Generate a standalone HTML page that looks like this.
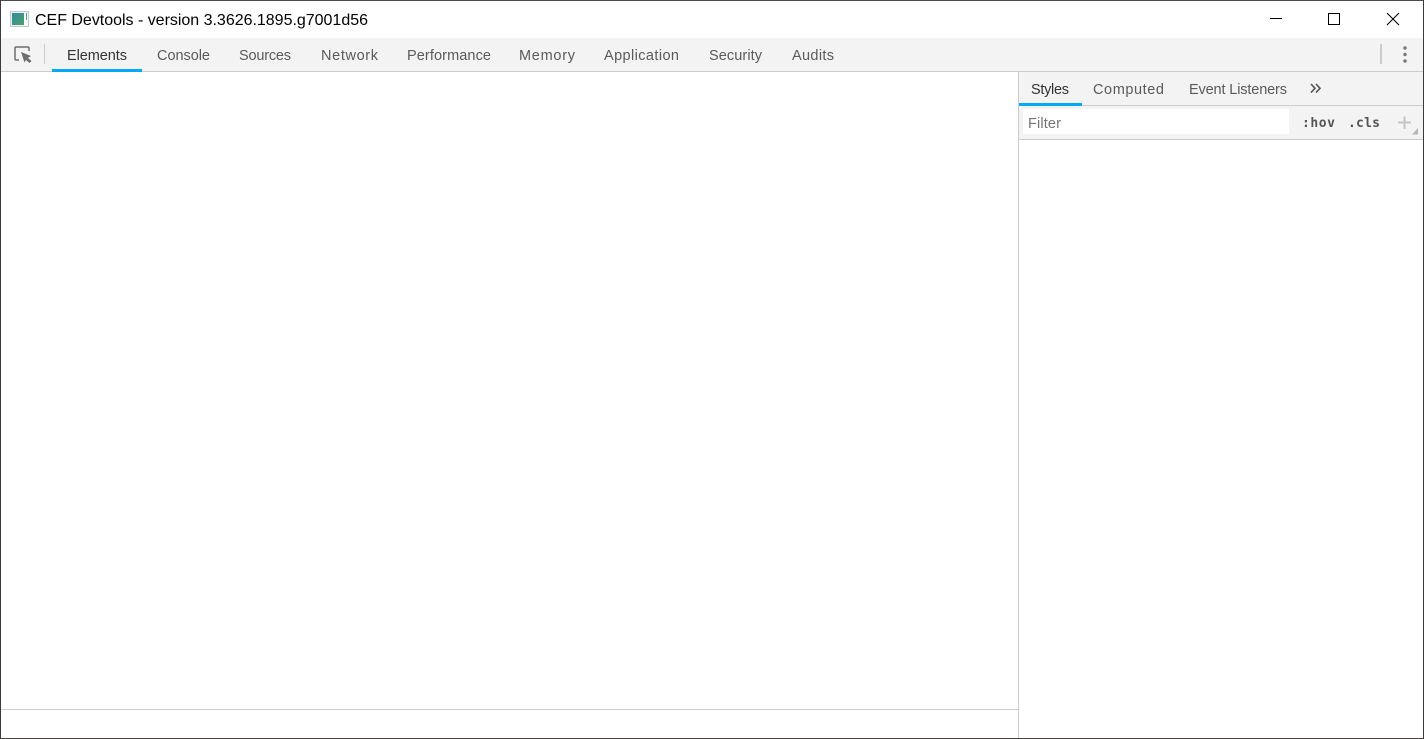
<!DOCTYPE html>
<html lang="en"><head><meta charset="utf-8"><title>CEF Devtools</title>
<style>
html,body{margin:0;padding:0;width:1424px;height:739px;overflow:hidden;background:#fff}
svg{display:block;position:absolute;left:0;top:0}
text{font-family:"Liberation Sans",sans-serif;font-size:14.5px;fill:#5a5a5a}
.m{font-family:"DejaVu Sans Mono",monospace;font-size:13px;font-weight:bold;fill:#555}
</style></head><body>
<svg width="1424" height="739" viewBox="0 0 1424 739" xmlns="http://www.w3.org/2000/svg">
<defs><linearGradient id="g" x1="0" y1="0" x2="1" y2="1"><stop offset="0" stop-color="#2f8f9f"/><stop offset="1" stop-color="#4f9f6a"/></linearGradient></defs>
<rect width="1424" height="739" fill="#fff"/>
<!-- window frame -->
<rect x="0" y="0" width="1424" height="1" fill="#4a4a4a"/>
<rect x="0" y="0" width="1" height="739" fill="#3a3a3a"/>
<rect x="1423" y="0" width="1" height="739" fill="#3a3a3a"/>
<rect x="0" y="738" width="1424" height="1" fill="#4a4442"/>
<!-- title bar -->
<rect x="10.500" y="11.500" width="18" height="15" fill="#eef0f1" stroke="#c4c9cc"/>
<rect x="12" y="13" width="12" height="12" fill="url(#g)"/>
<rect x="24" y="13" width="4" height="12" fill="#f7f8f8"/>
<rect x="26" y="13" width="1" height="7" fill="#5aa5a0"/>
<text x="35" y="25" style="font-size:16px;fill:#000" textLength="333" lengthAdjust="spacing">CEF Devtools - version 3.3626.1895.g7001d56</text>
<rect x="1270" y="18" width="12" height="1" fill="#000"/>
<rect x="1328.500" y="13.500" width="11" height="11" fill="none" stroke="#000"/>
<path d="M1387 13L1399 25M1399 13L1387 25" stroke="#000" stroke-width="1.05" fill="none"/>
<!-- main toolbar -->
<rect x="1" y="38" width="1422" height="33" fill="#f3f3f3"/>
<rect x="1" y="71" width="1422" height="1" fill="#cccccc"/>
<path d="M19 60H16a1 1 0 0 1-1-1V48a1 1 0 0 1 1-1H28a1 1 0 0 1 1 1V51" fill="none" stroke="#6e6e6e" stroke-width="1.5"/>
<path d="M21 52L31 56L28 58L31.500 61L29.500 63L26 60L24.500 62.500Z" fill="#6e6e6e"/>
<rect x="44" y="44" width="1" height="20" fill="#cccccc"/>
<text x="67" y="60" style="fill:#333" textLength="60" lengthAdjust="spacing">Elements</text>
<text x="157" y="60" textLength="53" lengthAdjust="spacing">Console</text>
<text x="239" y="60" textLength="52" lengthAdjust="spacing">Sources</text>
<text x="321" y="60" textLength="57" lengthAdjust="spacing">Network</text>
<text x="407" y="60" textLength="84" lengthAdjust="spacing">Performance</text>
<text x="519" y="60" textLength="56" lengthAdjust="spacing">Memory</text>
<text x="604" y="60" textLength="75" lengthAdjust="spacing">Application</text>
<text x="709" y="60" textLength="53" lengthAdjust="spacing">Security</text>
<text x="792" y="60" textLength="42" lengthAdjust="spacing">Audits</text>
<rect x="52" y="69" width="90" height="3" fill="#03a9f4"/>
<rect x="1380" y="44" width="2" height="20" fill="#cccccc"/>
<circle cx="1405" cy="48" r="1.7" fill="#777"/>
<circle cx="1405" cy="54.500" r="1.7" fill="#777"/>
<circle cx="1405" cy="61" r="1.7" fill="#777"/>
<!-- dividers -->
<rect x="1018" y="72" width="1" height="666" fill="#cccccc"/>
<rect x="1" y="709" width="1017" height="1" fill="#cccccc"/>
<!-- sidebar tabs -->
<rect x="1019" y="72" width="404" height="33" fill="#f3f3f3"/>
<rect x="1019" y="105" width="404" height="1" fill="#cccccc"/>
<text x="1031" y="94" style="fill:#333" textLength="38" lengthAdjust="spacing">Styles</text>
<text x="1093" y="94" textLength="71" lengthAdjust="spacing">Computed</text>
<text x="1189" y="94" textLength="98" lengthAdjust="spacing">Event Listeners</text>
<path d="M1311 84L1315 88.300L1311 92.600M1316 84L1320 88.300L1316 92.600" fill="none" stroke="#555" stroke-width="1.6"/>
<rect x="1019" y="103" width="63" height="3" fill="#03a9f4"/>
<!-- filter row -->
<rect x="1019" y="106" width="404" height="33" fill="#f3f3f3"/>
<rect x="1019" y="139" width="404" height="1" fill="#cccccc"/>
<rect x="1023" y="109" width="266" height="25" fill="#fff"/>
<text x="1028" y="128" style="fill:#757575" textLength="33" lengthAdjust="spacing">Filter</text>
<text class="m" x="1302" y="127" textLength="33" lengthAdjust="spacing">:hov</text>
<text class="m" x="1348" y="127" textLength="32" lengthAdjust="spacing">.cls</text>
<rect x="1398" y="121.500" width="13" height="2" fill="#c4c4c4"/>
<rect x="1403.500" y="116.500" width="2" height="12.500" fill="#c4c4c4"/>
<path d="M1418 128V134.500H1412Z" fill="#b5b5b5"/>
</svg>
</body></html>
